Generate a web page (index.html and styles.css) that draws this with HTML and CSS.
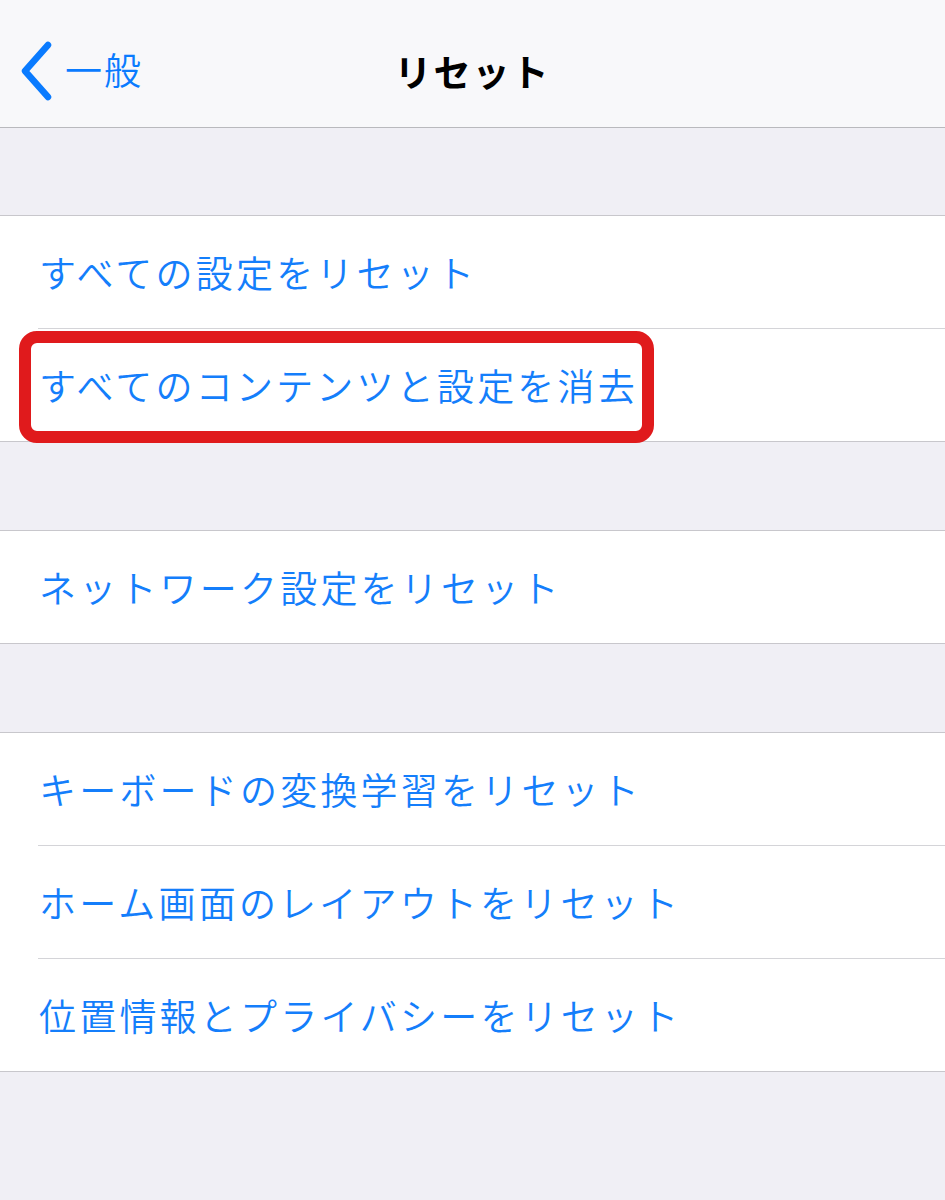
FILE: index.html
```html
<!DOCTYPE html>
<html lang="ja">
<head>
    <meta charset="UTF-8">
    <title>リセット</title>
    <link rel="stylesheet" href="styles.css">
</head>
<body>
    <header class="navbar">
        <a class="back" href="#">
            <svg class="chevron" width="36" height="60" viewBox="0 0 36 60">
                <path d="M28 4 L5 30 L28 56" fill="none" stroke="#0a7bff" stroke-width="6.5" stroke-linecap="round" stroke-linejoin="round"/>
            </svg>
            <span>一般</span>
        </a>
        <h1 class="title">リセット</h1>
    </header>

    <div class="spacer first"></div>
    <section class="group">
        <div class="cell">すべての設定をリセット</div>
        <div class="cell marked">
            すべてのコンテンツと設定を消去
            <span class="highlight"></span>
        </div>
    </section>

    <div class="spacer"></div>
    <section class="group">
        <div class="cell">ネットワーク設定をリセット</div>
    </section>

    <div class="spacer"></div>
    <section class="group">
        <div class="cell">キーボードの変換学習をリセット</div>
        <div class="cell">ホーム画面のレイアウトをリセット</div>
        <div class="cell">位置情報とプライバシーをリセット</div>
    </section>
</body>
</html>
```

FILE: styles.css
```css
body {
    margin: 0;
    background-color: #f0eff5;
    font-family: "Noto Sans CJK JP", "Noto Sans", sans-serif;
    min-height: 1200px;
}
.navbar {
    height: 127px;
    background-color: #f8f8fa;
    border-bottom: 1px solid #b9b9bd;
    position: relative;
    display: flex;
    align-items: center;
    justify-content: center;
}
.back {
    position: absolute;
    left: 20px;
    top: 41px;
    display: flex;
    align-items: center;
    gap: 9px;
    color: #0a7bff;
    text-decoration: none;
    font-size: 37px;
    font-weight: 350;
    letter-spacing: 2px;
}
.back span {
    margin-top: -4px;
}
.title {
    margin: 14px 0 0 0;
    font-size: 37px;
    font-weight: 700;
    color: #000;
    letter-spacing: 2px;
}
.spacer {
    height: 88px;
}
.spacer.first {
    height: 87px;
}
.group {
    background-color: #fff;
    border-top: 1px solid #c8c7cc;
    border-bottom: 1px solid #c8c7cc;
}
.cell {
    position: relative;
    margin-left: 38px;
    padding-left: 1px;
    height: 112px;
    display: flex;
    align-items: center;
    color: #147efb;
    font-size: 37px;
    font-weight: 350;
    letter-spacing: 3.2px;
}
.cell + .cell {
    border-top: 1px solid #d4d4d8;
}
.highlight {
    position: absolute;
    left: -19px;
    top: 2px;
    width: 611px;
    height: 88px;
    border: 12px solid #e01a1c;
    border-radius: 18px;
}
```
